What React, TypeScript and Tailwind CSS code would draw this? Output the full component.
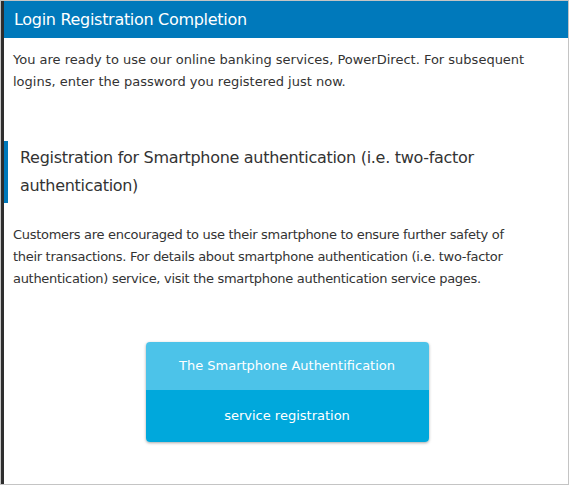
export default function App() {
  return (
    <div
      className="w-[569px] h-[485px] border border-[#c4c4c4] bg-white overflow-hidden"
      style={{ fontFamily: "Tahoma, 'DejaVu Sans', sans-serif" }}
    >
      <div className="h-full border-l-[3px] border-[#2e2e2e] flex flex-col">
        {/* header */}
        <div className="h-[37px] bg-[#0079bb] flex items-center pl-[10px] text-[16px] tracking-[-0.3px] text-white">
          Login Registration Completion
        </div>

        <p className="mt-[11px] px-[9px] text-[13px] leading-[22px] text-[#333]">
          You are ready to use our online banking services, PowerDirect. For subsequent
          logins, enter the password you registered just now.
        </p>

        {/* section heading */}
        <div className="mt-[48px] border-l-[4px] border-[#0079bb] pl-[12px] pr-[80px] py-[3px] text-[16px] tracking-[-0.3px] leading-[28px] text-[#333]">
          Registration for Smartphone authentication (i.e. two-factor authentication)
        </div>

        <p className="mt-[21px] pl-[9px] pr-[56px] text-[13px] tracking-[-0.3px] leading-[22px] text-[#333]">
          Customers are encouraged to use their smartphone to ensure further safety of
          their transactions. For details about smartphone authentication (i.e. two-factor
          authentication) service, visit the smartphone authentication service pages.
        </p>

        <div className="flex justify-center mt-[52px] pl-[2px]">
          <button className="w-[283px] rounded-[4px] overflow-hidden shadow-[0_1px_3px_rgba(0,0,0,0.35)] text-white text-[13px]">
            <div className="h-[48px] bg-[#4cc3e9] flex items-center justify-center">
              The Smartphone Authentification
            </div>
            <div className="h-[52px] bg-[#00a8dc] flex items-center justify-center">
              service registration
            </div>
          </button>
        </div>
      </div>
    </div>
  );
}
